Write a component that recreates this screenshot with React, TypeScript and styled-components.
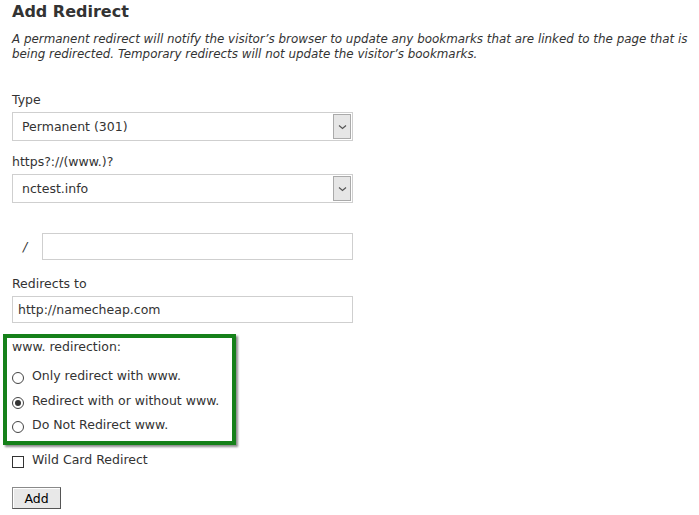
import React from "react";
import styled, { createGlobalStyle } from "styled-components";

const Global = createGlobalStyle`
  html, body { margin: 0; padding: 0; background: #fff; }
  body { font-family: "DejaVu Sans", Verdana, sans-serif; color: #333; }
`;

const Page = styled.div`
  padding: 0 12px;
  width: 699px;
  box-sizing: border-box;
`;

const Title = styled.h2`
  margin: 0;
  padding-top: 2px;
  font-size: 16px;
  line-height: 20px;
  font-weight: bold;
  color: #333;
`;

const Description = styled.p`
  margin: 10px 0 0;
  font-size: 11.9px;
  line-height: 15px;
  font-style: italic;
  color: #333;
  white-space: nowrap;
`;

const Field = styled.div<{ $top: number }>`
  margin-top: ${(p) => p.$top}px;
  display: flex;
  flex-direction: column;
`;

const Label = styled.label`
  font-size: 12.5px;
  line-height: 16px;
  margin-bottom: 4px;
`;

const SelectBox = styled.div`
  width: 341px;
  height: 29px;
  box-sizing: border-box;
  border: 1px solid #cfcfcf;
  display: flex;
  align-items: stretch;
  background: #fff;
`;

const SelectValue = styled.div`
  flex: 1;
  display: flex;
  align-items: center;
  padding-left: 9px;
  font-size: 12.5px;
`;

const Arrow = styled.div`
  width: 16px;
  margin: 1px;
  border: 1px solid #aaa;
  background: #e6e6e6;
  display: flex;
  align-items: center;
  justify-content: center;
`;

const TextInput = styled.div<{ $w: number }>`
  width: ${(p) => p.$w}px;
  height: 27px;
  box-sizing: border-box;
  border: 1px solid #cfcfcf;
  padding-left: 5px;
  display: flex;
  align-items: center;
  font-size: 12.5px;
`;

const PathRow = styled.div`
  margin-top: 30px;
  display: flex;
  align-items: center;
`;

const Slash = styled.span`
  width: 30px;
  padding-left: 11px;
  box-sizing: border-box;
  font-size: 12.5px;
  font-style: italic;
`;

const Highlight = styled.fieldset`
  margin: 11px 0 0 -9px;
  padding: 1px 0 6px 5px;
  width: 233px;
  height: 111px;
  box-sizing: border-box;
  border: 4px solid #16811a;
  box-shadow: 2px 2px 2px rgba(0, 0, 0, 0.45);
  min-inline-size: 0;
`;

const BoxTitle = styled.div`
  font-size: 12.5px;
  line-height: 15px;
  margin-bottom: 10px;
`;

const OptionRow = styled.label`
  display: flex;
  align-items: center;
  gap: 8px;
  font-size: 12.5px;
  line-height: 16px;
  height: 24.5px;
`;

const Radio = styled.span<{ $on?: boolean }>`
  width: 12px;
  height: 12px;
  margin-top: 4px;
  box-sizing: border-box;
  border: 1px solid #444;
  border-radius: 50%;
  background: #fff;
  display: flex;
  align-items: center;
  justify-content: center;
  &::after {
    content: "";
    width: 6px;
    height: 6px;
    border-radius: 50%;
    background: ${(p) => (p.$on ? "#333" : "transparent")};
  }
`;

const CheckRow = styled.label`
  margin-top: 7px;
  display: flex;
  align-items: center;
  gap: 8px;
  font-size: 12.5px;
  line-height: 16px;
`;

const Check = styled.span`
  width: 12px;
  height: 12px;
  margin-top: 4px;
  box-sizing: border-box;
  border: 1px solid #333;
  background: #fff;
`;

const Button = styled.button`
  margin-top: 19px;
  width: 49px;
  height: 22px;
  font-family: "DejaVu Sans", Verdana, sans-serif;
  font-size: 12.5px;
  color: #000;
  background: #e8e8e8;
  border: 1px solid #8a8a8a;
  border-right-color: #555;
  border-bottom-color: #555;
  box-shadow: inset 1px 1px 0 #fff;
  padding: 0;
`;

const Chevron = () => (
  <svg width="9" height="6" viewBox="0 0 9 6">
    <path d="M1 1.5 L4.5 4.5 L8 1.5" fill="none" stroke="#555" strokeWidth="1.2" />
  </svg>
);

const Select = ({ value }: { value: string }) => (
  <SelectBox>
    <SelectValue>{value}</SelectValue>
    <Arrow>
      <Chevron />
    </Arrow>
  </SelectBox>
);

export default function App() {
  return (
    <Page>
      <Global />
      <Title>Add Redirect</Title>
      <Description>
        A permanent redirect will notify the visitor’s browser to update any bookmarks that are linked to the page that is
        <br />
        being redirected. Temporary redirects will not update the visitor’s bookmarks.
      </Description>
      <Field $top={30}>
        <Label>Type</Label>
        <Select value="Permanent (301)" />
      </Field>
      <Field $top={13}>
        <Label>https?://(www.)?</Label>
        <Select value="nctest.info" />
      </Field>
      <PathRow>
        <Slash>/</Slash>
        <TextInput $w={311} />
      </PathRow>
      <Field $top={16}>
        <Label>Redirects to</Label>
        <TextInput $w={341}>http://namecheap.com</TextInput>
      </Field>
      <Highlight>
        <BoxTitle>www. redirection:</BoxTitle>
        <OptionRow>
          <Radio />
          Only redirect with www.
        </OptionRow>
        <OptionRow>
          <Radio $on />
          Redirect with or without www.
        </OptionRow>
        <OptionRow>
          <Radio />
          Do Not Redirect www.
        </OptionRow>
      </Highlight>
      <CheckRow>
        <Check />
        Wild Card Redirect
      </CheckRow>
      <Button>Add</Button>
    </Page>
  );
}
